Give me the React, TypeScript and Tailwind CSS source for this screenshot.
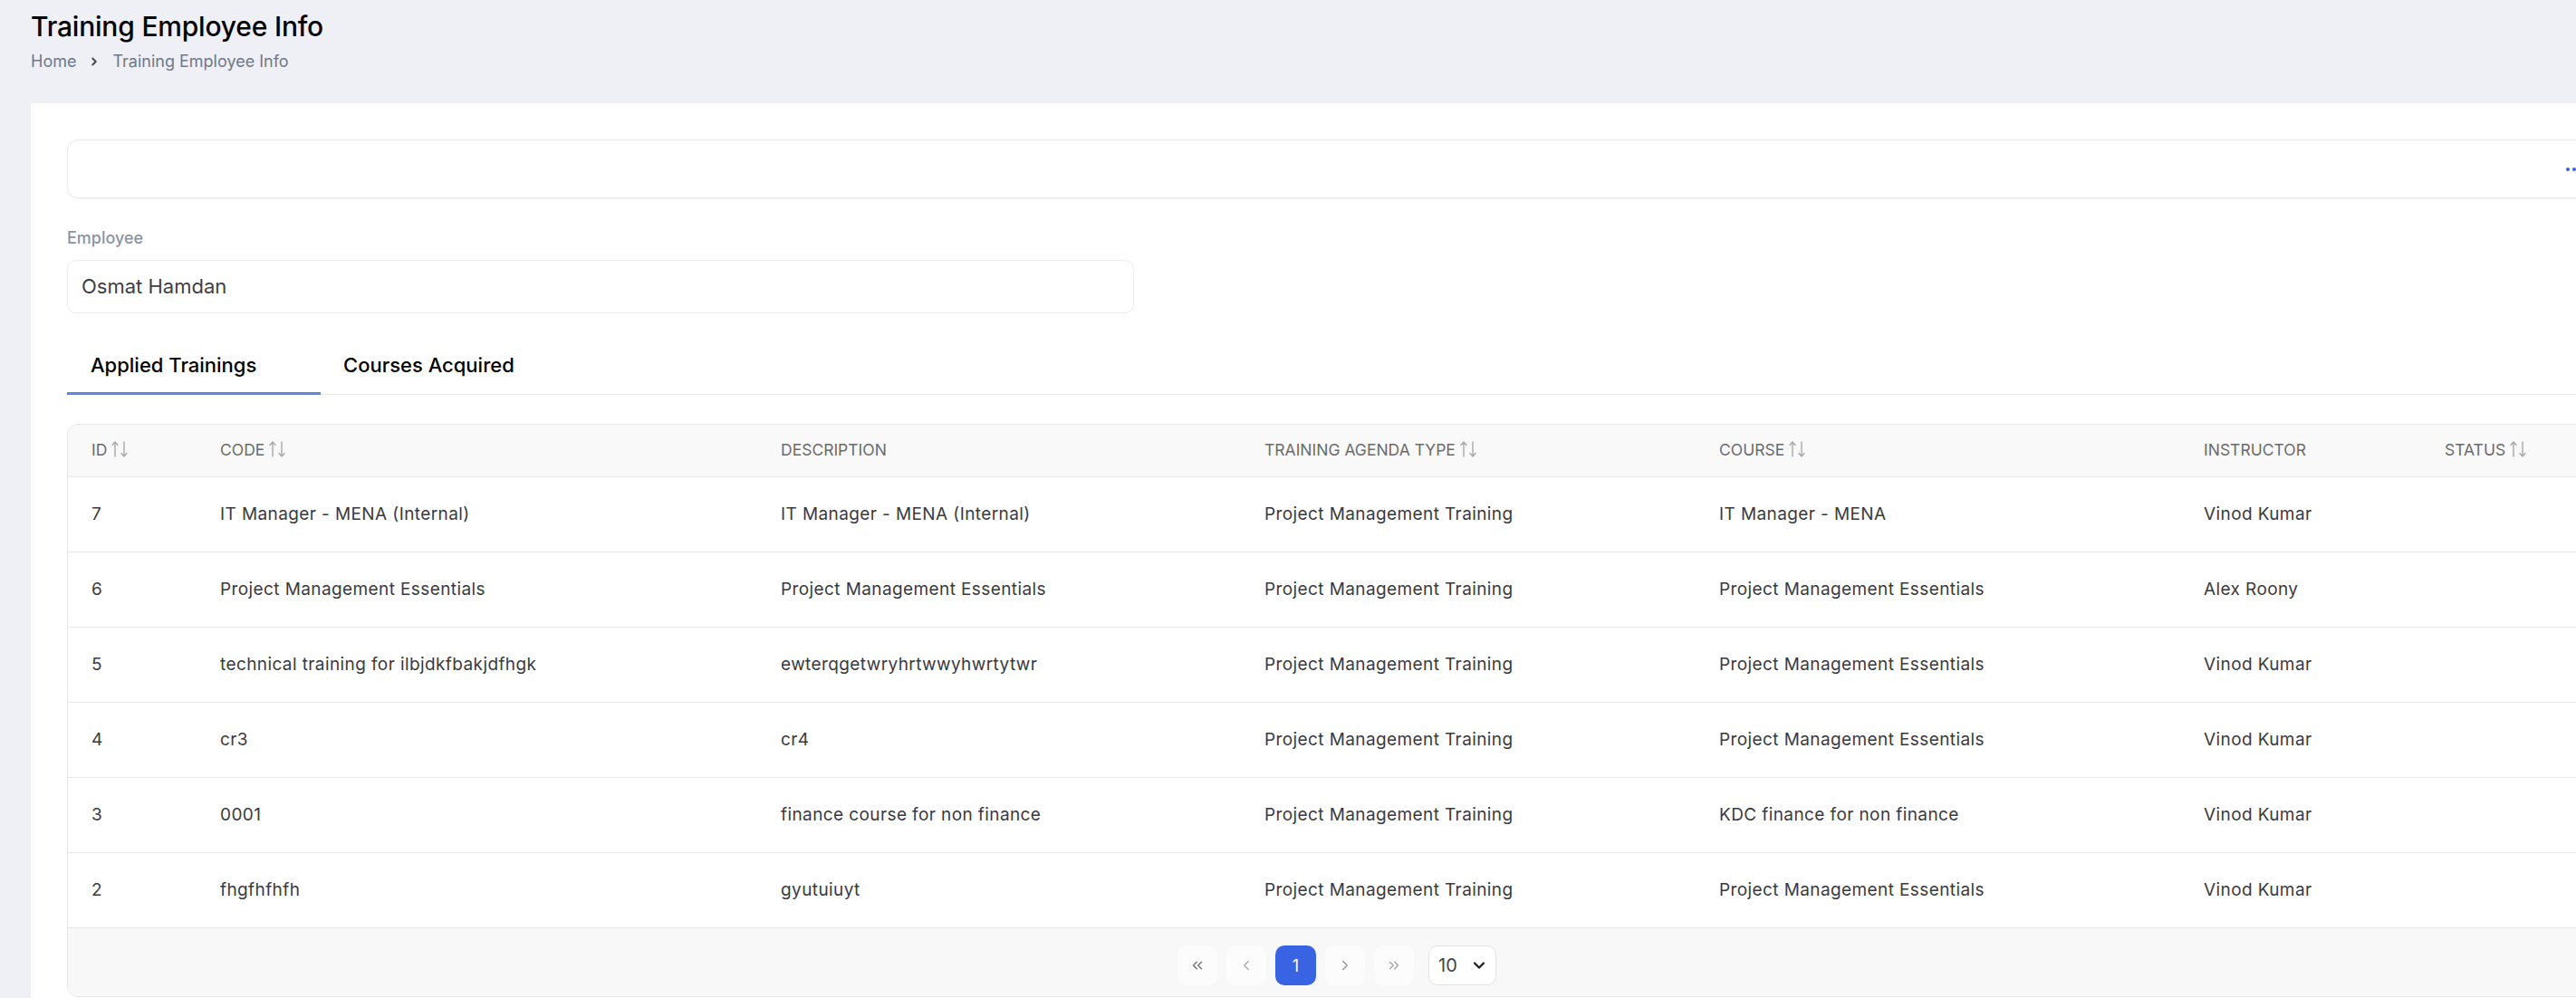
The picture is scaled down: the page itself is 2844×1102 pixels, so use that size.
import { ChevronRight, ChevronLeft, ChevronsLeft, ChevronsRight, ChevronDown } from "lucide-react";

type Row = {
  id: number;
  code: string;
  description: string;
  agenda: string;
  course: string;
  instructor: string;
};

const rows: Row[] = [
  { id: 7, code: "IT Manager - MENA (Internal)", description: "IT Manager - MENA (Internal)", agenda: "Project Management Training", course: "IT Manager - MENA", instructor: "Vinod Kumar" },
  { id: 6, code: "Project Management Essentials", description: "Project Management Essentials", agenda: "Project Management Training", course: "Project Management Essentials", instructor: "Alex Roony" },
  { id: 5, code: "technical training for ilbjdkfbakjdfhgk", description: "ewterqgetwryhrtwwyhwrtytwr", agenda: "Project Management Training", course: "Project Management Essentials", instructor: "Vinod Kumar" },
  { id: 4, code: "cr3", description: "cr4", agenda: "Project Management Training", course: "Project Management Essentials", instructor: "Vinod Kumar" },
  { id: 3, code: "0001", description: "finance course for non finance", agenda: "Project Management Training", course: "KDC finance for non finance", instructor: "Vinod Kumar" },
  { id: 2, code: "fhgfhfhfh", description: "gyutuiuyt", agenda: "Project Management Training", course: "Project Management Essentials", instructor: "Vinod Kumar" },
];

const cols = "grid grid-cols-[142px_619px_534px_502px_535px_266px_1fr] pl-[26px]";

function SortIcon() {
  return (
    <svg width="20" height="20" viewBox="0 0 20 20" className="ml-[4px] -mt-[4px]" fill="none" stroke="#a8a8a8" strokeWidth="1.4" strokeLinecap="round" strokeLinejoin="round">
      <path d="M5 18V2M2 5.5L5 2l3 3.5" />
      <path d="M15 2v16M12 14.5L15 18l3-3.5" />
    </svg>
  );
}

function HeaderCell({ label, sort }: { label: string; sort?: boolean }) {
  return (
    <div className="flex items-center">
      <span>{label}</span>
      {sort && <SortIcon />}
    </div>
  );
}

export default function App() {
  return (
    <div className="min-h-screen w-[2952px] bg-[#eff0f5] font-['Inter',sans-serif] pb-[30px]">
      <div className="px-[34px] pt-[10px]">
        <h1 className="text-[30px] leading-[38px] font-medium text-black tracking-[-0.2px]">Training Employee Info</h1>
        <div className="mt-[8px] flex items-center text-[18px] leading-[24px] text-[#6f7889]">
          <span>Home</span>
          <ChevronRight size={14} strokeWidth={3.4} className="mx-[13px] text-[#4a4a4a]" />
          <span>Training Employee Info</span>
        </div>
      </div>

      <div className="ml-[34px] mt-[34px] w-[2884px] bg-white px-[40px] pt-[40px] pb-[40px]">
        <div className="flex h-[65px] items-center justify-end rounded-[12px] border border-[#e6e7eb] pr-[26px] shadow-[0_1px_3px_rgba(0,0,0,0.04)]">
          <div className="flex gap-[3px]">
            <span className="h-[4px] w-[4px] rounded-full bg-[#3461e6]" />
            <span className="h-[4px] w-[4px] rounded-full bg-[#3461e6]" />
            <span className="h-[4px] w-[4px] rounded-full bg-[#3461e6]" />
          </div>
        </div>

        <div className="mt-[32px] text-[18px] leading-[24px] font-medium text-[#8a93a6]">Employee</div>
        <div className="mt-[12px] flex h-[59px] w-[1178px] items-center rounded-[10px] border border-[#ebebee] px-[15px] text-[22px] text-[#3f3f46]">
          Osmat Hamdan
        </div>

        <div className="mt-[28px] flex border-b border-[#e8e8ea]">
          <div className="flex h-[62px] w-[280px] items-center border-b-[3px] border-[#5b86ea] pl-[26px] text-[22px] font-medium text-black -mb-px">
            Applied Trainings
          </div>
          <div className="flex h-[62px] w-[280px] items-center pl-[25px] text-[22px] font-medium text-black -mb-px border-b-[3px] border-transparent">
            Courses Acquired
          </div>
        </div>

        <div className="mt-[32px] overflow-hidden rounded-[12px] border border-[#e6e6e6]">
          <div className={`${cols} h-[57px] items-center bg-[#f9f9f9] text-[17.5px] uppercase text-[#6b6b6b]`}>
            <HeaderCell label="ID" sort />
            <HeaderCell label="Code" sort />
            <HeaderCell label="Description" />
            <HeaderCell label="Training Agenda Type" sort />
            <HeaderCell label="Course" sort />
            <HeaderCell label="Instructor" />
            <HeaderCell label="Status" sort />
          </div>
          {rows.map((r) => (
            <div key={r.id} className={`${cols} h-[83px] items-center border-t border-[#e8e8e8] text-[19px] tracking-[0.4px] text-[#3a3a3f]`}>
              <div>{r.id}</div>
              <div>{r.code}</div>
              <div>{r.description}</div>
              <div>{r.agenda}</div>
              <div>{r.course}</div>
              <div>{r.instructor}</div>
              <div />
            </div>
          ))}
          <div className="flex h-[76px] items-start justify-center gap-[10px] border-t border-[#e6e6e6] bg-[#f8f8f8] pt-[19px]">
            <button className="flex h-[44px] w-[44px] items-center justify-center rounded-[10px] bg-[#fcfcfc] text-[#777]">
              <ChevronsLeft size={18} strokeWidth={2} />
            </button>
            <button className="flex h-[44px] w-[44px] items-center justify-center rounded-[10px] bg-[#fcfcfc] text-[#aaa]">
              <ChevronLeft size={18} strokeWidth={2} />
            </button>
            <button className="flex h-[44px] w-[45px] items-center justify-center rounded-[10px] bg-[#3864e4] text-[18px] text-white">
              1
            </button>
            <button className="flex h-[44px] w-[44px] items-center justify-center rounded-[10px] bg-[#fcfcfc] text-[#999]">
              <ChevronRight size={18} strokeWidth={2} />
            </button>
            <button className="flex h-[44px] w-[44px] items-center justify-center rounded-[10px] bg-[#fcfcfc] text-[#aaa]">
              <ChevronsRight size={18} strokeWidth={2} />
            </button>
            <div className="ml-[6px] flex h-[44px] w-[75px] items-center justify-between rounded-[10px] border border-[#e2e2e2] bg-white pl-[10px] pr-[8px] text-[20px] text-[#444]">
              <span>10</span>
              <ChevronDown size={20} strokeWidth={2.6} className="text-[#1a1a1a]" />
            </div>
          </div>
        </div>
      </div>
    </div>
  );
}
